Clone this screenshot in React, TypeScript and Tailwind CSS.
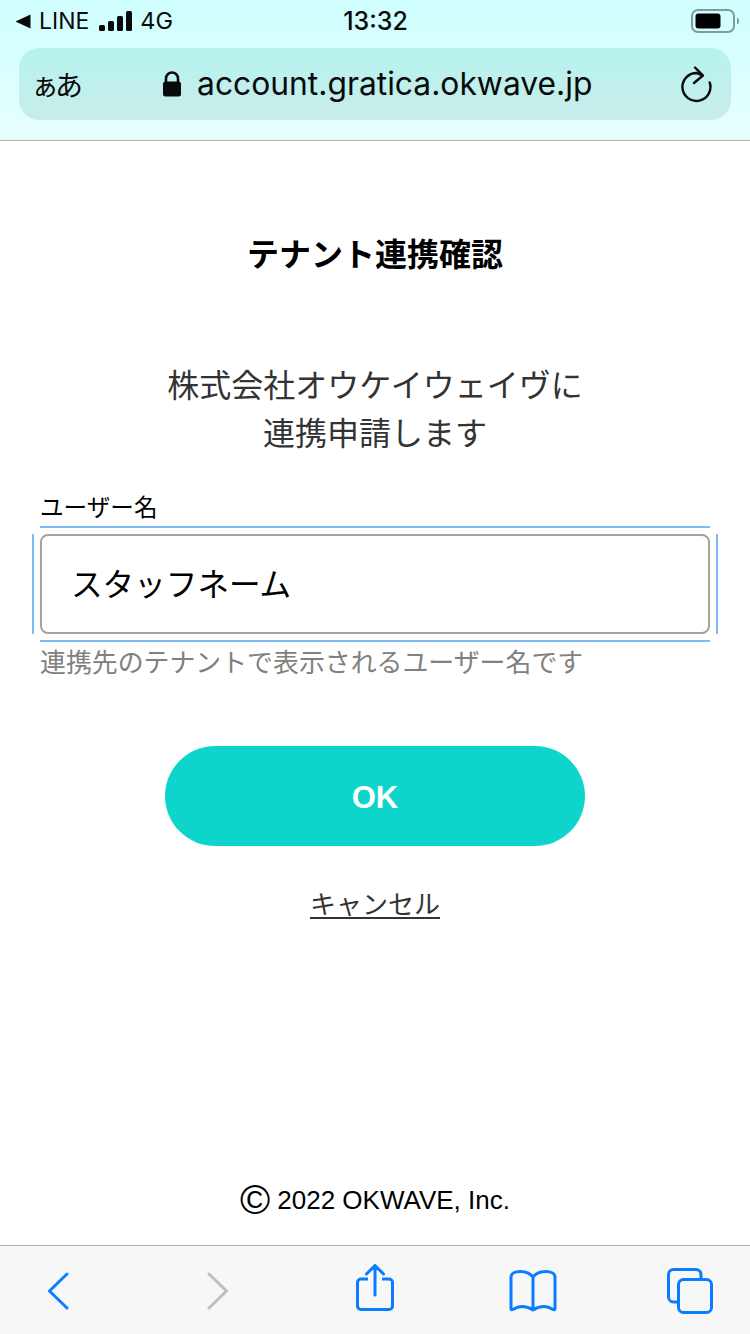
const jp = "font-['Noto_Sans_CJK_JP','Noto_Sans',sans-serif]";

function StatusBar() {
	return (
		<div className="grid h-[40px] grid-cols-3 items-center pl-[15px] pr-[11px] pt-[2px] font-['Inter',sans-serif] text-[#0a0a0a]">
			<div className="flex items-center">
				<svg width="16" height="15" viewBox="0 0 16 15" className="mr-[8px]">
					<path d="M0.500 7.500 15.500 0.500V14.500Z" fill="#0a0a0a" />
				</svg>
				<span className="text-[23px] leading-none">LINE</span>
				<svg width="33" height="20" viewBox="0 0 33 20" className="ml-[10px] mr-[8px]">
					<rect x="0" y="14" width="6" height="6" rx="1.500" fill="#0a0a0a" />
					<rect x="9" y="10" width="6" height="10" rx="1.500" fill="#0a0a0a" />
					<rect x="18" y="5" width="6" height="15" rx="1.500" fill="#0a0a0a" />
					<rect x="27" y="0" width="6" height="20" rx="1.500" fill="#0a0a0a" />
				</svg>
				<span className="text-[23.500px] leading-none">4G</span>
			</div>
			<div className="pr-[3px] text-center text-[25px] font-medium leading-none">13:32</div>
			<div className="flex items-center justify-end">
				<svg width="48" height="24" viewBox="0 0 48 24">
					<rect x="1" y="1" width="42" height="22" rx="6" fill="none" stroke="#7f9c9c" strokeWidth="2" />
					<rect x="4.500" y="4.500" width="25" height="15" rx="3" fill="#000" />
					<path d="M46 8.500c1.200.4 2 1.800 2 3.500s-.8 3.100-2 3.500Z" fill="#7f9c9c" />
				</svg>
			</div>
		</div>
	);
}

function AddressBar() {
	return (
		<div className="mx-[19px] mt-[8px] flex h-[72px] items-center rounded-[20px] bg-gradient-to-b from-[#b6f3ee] to-[#c8edea] text-[#0a0a0a]">
			<span className={`${jp} ml-[12px] text-[28px] leading-none`}>
				<span className="tracking-[-4px]">ぁ</span>あ
			</span>
			<div className="ml-[79px] flex items-center">
				<svg width="20" height="26" viewBox="0 0 20 26">
					<path d="M4 11V7.500a6 6 0 0 1 12 0V11" fill="none" stroke="#0a0a0a" strokeWidth="2.600" />
					<rect x="1" y="10.500" width="18" height="15" rx="2.500" fill="#0a0a0a" />
				</svg>
				<span className="ml-[15px] font-['Inter',sans-serif] text-[31.800px] leading-none">
					account.gratica.okwave.jp
				</span>
			</div>
			<svg width="32" height="38" viewBox="0 0 32 38" className="ml-auto mr-[18px]">
				<path
					d="M28.700 17.500A14 14 0 1 1 15.500 8L21 10"
					fill="none"
					stroke="#0a0a0a"
					strokeWidth="2.400"
					strokeLinecap="round"
					strokeLinejoin="round"
				/>
				<path d="M14 2.500 22 10.500 13 18" fill="none" stroke="#0a0a0a" strokeWidth="2.400" strokeLinecap="round" strokeLinejoin="round" />
			</svg>
		</div>
	);
}

function UserNameField() {
	return (
		<div className="relative mx-[40px] mt-[11px]">
			{/* focus ring: iOS draws it with the corners faded out */}
			<span className="absolute left-0 right-0 top-[-8px] h-[2px] bg-[#7db8fb]" />
			<span className="absolute bottom-[-8px] left-0 right-0 h-[2px] bg-[#7db8fb]" />
			<span className="absolute bottom-0 left-[-8px] top-0 w-[2px] bg-[#7db8fb]" />
			<span className="absolute bottom-0 right-[-8px] top-0 w-[2px] bg-[#7db8fb]" />
			<div className="flex h-[100px] items-center rounded-[8px] border-2 border-[#a3a3a3] bg-white pb-[3px] pl-[29px] text-[31.600px] leading-none text-black">
				スタッフネーム
			</div>
		</div>
	);
}

function Toolbar() {
	return (
		<div className="flex h-[89px] items-start border-t border-t-[#b3b3b3] bg-[#f7f7f7] pl-[46px]">
			<svg width="24" height="38" viewBox="0 0 24 38" className="mt-[26px]">
				<path d="M21 2 3.500 19 21 36" fill="none" stroke="#0a7cff" strokeWidth="3" strokeLinecap="round" strokeLinejoin="round" />
			</svg>
			<svg width="24" height="38" viewBox="0 0 24 38" className="ml-[136px] mt-[26px]">
				<path d="M3 2 20.500 19 3 36" fill="none" stroke="#bfbfbf" strokeWidth="3" strokeLinecap="round" strokeLinejoin="round" />
			</svg>
			<svg width="38" height="48" viewBox="0 0 38 48" className="ml-[126px] mt-[18px]">
				<path d="M12 15H5a3.500 3.500 0 0 0-3.500 3.500V42A3.500 3.500 0 0 0 5 45.500H33a3.500 3.500 0 0 0 3.500-3.500V18.500A3.500 3.500 0 0 0 33 15H26" fill="none" stroke="#0a7cff" strokeWidth="3" />
				<path d="M19 31V2M10.500 10 19 1.500 27.500 10" fill="none" stroke="#0a7cff" strokeWidth="3" strokeLinecap="round" strokeLinejoin="round" />
			</svg>
			<svg width="48" height="42" viewBox="0 0 48 42" className="ml-[115px] mt-[24px]">
				<path
					d="M24 7C21 3 17 1.500 11 1.500 6 1.500 2 3.500 2 7V38.500C2 40 3 40 4 39.500 7 37.500 10 36.500 13 36.500 17 36.500 21 38 24 40 27 38 31 36.500 35 36.500 38 36.500 41 37.500 44 39.500 45 40 46 40 46 38.500V7C46 3.500 42 1.500 37 1.500 31 1.500 27 3 24 7ZM24 7V40"
					fill="none"
					stroke="#0a7cff"
					strokeWidth="3"
					strokeLinejoin="round"
				/>
			</svg>
			<svg width="46" height="46" viewBox="0 0 46 46" className="ml-[110px] mt-[22px]">
				<path d="M11 34H6.500A5 5 0 0 1 1.500 29V6.500A5 5 0 0 1 6.500 1.500H29A5 5 0 0 1 34 6.500V11" fill="none" stroke="#0a7cff" strokeWidth="3" />
				<rect x="11.500" y="11.500" width="33" height="33" rx="5" fill="none" stroke="#0a7cff" strokeWidth="3" />
			</svg>
		</div>
	);
}

export default function App() {
	return (
		<div className="flex h-[1334px] w-[750px] flex-col overflow-hidden bg-white">
			<header className="h-[141px] shrink-0 border-b border-b-[#b3b3b3] bg-gradient-to-b from-[#cffeff] to-[#e6fffd]">
				<StatusBar />
				<AddressBar />
			</header>

			<main className={`${jp} flex flex-1 flex-col`}>
				<h1 className="mt-[89px] text-center text-[32px] font-bold leading-[44px] text-black">
					テナント連携確認
				</h1>
				<p className="mt-[85px] text-center text-[32px] leading-[48px] text-[#333333]">
					株式会社オウケイウェイヴに
					<br />
					連携申請します
				</p>
				<label className="ml-[40px] mt-[34px] block text-[23.600px] leading-[34px] text-black">
					ユーザー名
				</label>
				<UserNameField />
				<p className="ml-[40px] mt-[8px] text-[25.900px] leading-[38px] text-[#808080]">
					連携先のテナントで表示されるユーザー名です
				</p>
				<button className="mx-auto mt-[66px] block h-[100px] w-[420px] rounded-full bg-[#0ed5cb] pt-[4px] font-['Liberation_Sans',sans-serif] text-[31px] font-bold text-white">
					OK
				</button>
				<a className="mx-auto mt-[37px] block text-[26px] leading-[40px] text-[#333333] underline underline-offset-[3px]">
					キャンセル
				</a>
				<div className="mt-auto mb-[23px] flex items-center justify-center font-['Liberation_Sans',sans-serif] text-[26px] leading-[44px] text-black">
					<span className="mr-[7px] text-[41px] leading-[44px]">©</span>
					2022 OKWAVE, Inc.
				</div>
			</main>

			<Toolbar />
		</div>
	);
}
